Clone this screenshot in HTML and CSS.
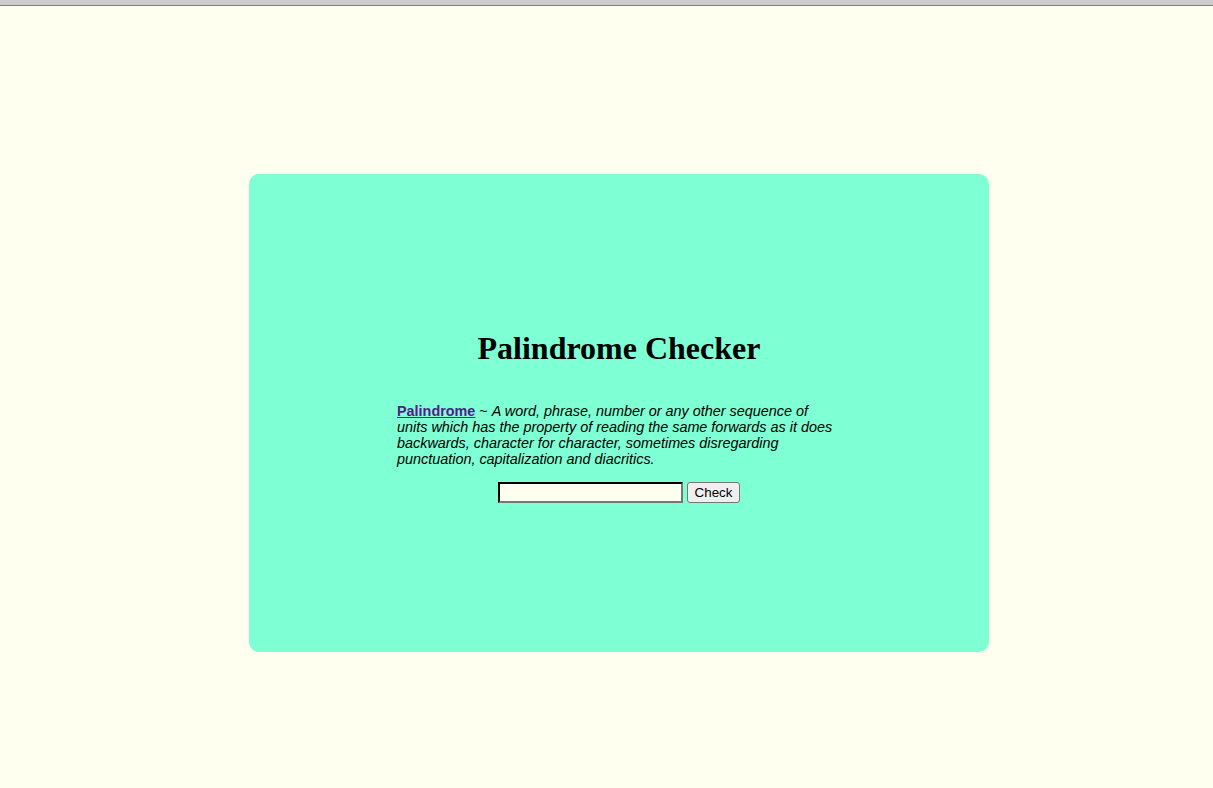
FILE: index.html
```html
<!DOCTYPE html>
<html lang="en">
<head>
<meta charset="utf-8">
<title>Palindrome Checker</title>
<link rel="stylesheet" href="styles.css">
</head>
<body>
<div class="topbar"></div>
<main class="page">
  <section class="card">
    <h1 class="title">Palindrome Checker</h1>
    <p class="definition"><a class="term" href="#">Palindrome</a> ~ <em>A word, phrase, number or any other sequence of units which has the property of reading the same forwards as it does backwards, character for character, sometimes disregarding punctuation, capitalization and diacritics.</em></p>
    <form class="checker">
      <input class="text-input" type="text">
      <button class="check-btn" type="button">Check</button>
    </form>
  </section>
</main>
</body>
</html>
```

FILE: styles.css
```css
html, body {
  margin: 0;
  padding: 0;
  background: #fffff0;
}

body {
  font-family: "Liberation Serif", "Times New Roman", serif;
  color: #000;
}

.topbar {
  height: 5px;
  background: #cccccc;
  border-bottom: 1px solid #7f7f7f;
}

.page {
  padding-top: 168px;
  padding-left: 25px;
}

.card {
  box-sizing: border-box;
  width: 740px;
  height: 478px;
  margin: 0 auto;
  padding-top: 157px;
  background: #7fffd4;
  border-radius: 10px;
}

.title {
  margin: 0;
  font-size: 32px;
  font-weight: bold;
  text-align: center;
  line-height: 35px;
}

.definition {
  width: 444px;
  margin: 37px auto 0;
  font-family: "Liberation Sans", Arial, sans-serif;
  font-size: 14.4px;
  line-height: 16px;
}

.definition em {
  font-style: italic;
}

.term {
  color: #551a8b;
  font-weight: bold;
  text-decoration: underline;
}

.checker {
  display: flex;
  justify-content: center;
  align-items: center;
  gap: 4px;
  margin-top: 15px;
}

.text-input {
  box-sizing: border-box;
  width: 185px;
  height: 21px;
  margin: 0;
  padding: 1px 2px;
  background: #fffff0;
  border: 2px inset #767676;
  border-top-color: #222;
  border-left-color: #222;
  border-right-color: #777;
  border-bottom-color: #777;
  font-family: "Liberation Sans", Arial, sans-serif;
  font-size: 13.33px;
}

.check-btn {
  box-sizing: border-box;
  width: 53px;
  height: 21px;
  margin: 0;
  padding: 0;
  background: #efefef;
  border: 1px solid #767676;
  border-radius: 3px;
  font-family: "Liberation Sans", Arial, sans-serif;
  font-size: 13.33px;
  color: #000;
}
```
